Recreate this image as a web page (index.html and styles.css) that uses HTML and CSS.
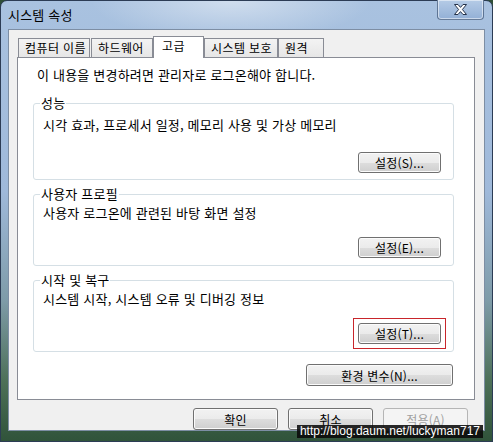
FILE: index.html
```html
<!DOCTYPE html>
<html lang="ko">

<head>
    <meta charset="UTF-8">
    <meta name="viewport" content="width=device-width, initial-scale=1.0">
    <title>시스템 속성</title>
    <link rel="stylesheet" href="styles.css">
</head>

<body>

    <div class="window">
        <div class="titlebar">
            <span class="title">시스템 속성</span>
            <span class="close-btn">
                <svg width="13" height="11" viewBox="0 0 13 11">
                    <path d="M0.5 0.5 H4 L6.5 3.4 L9 0.5 H12.5 L8.4 5.5 L12.5 10.5 H9 L6.5 7.6 L4 10.5 H0.5 L4.6 5.5 Z"
                        fill="#ffffff" stroke="#25324a" stroke-width="1" stroke-linejoin="round" />
                </svg>
            </span>
        </div>

        <div class="client">
            <!-- 탭 -->
            <div class="tabs">
                <div class="tab">컴퓨터 이름</div>
                <div class="tab">하드웨어</div>
                <div class="tab active">고급</div>
                <div class="tab">시스템 보호</div>
                <div class="tab">원격</div>
            </div>

            <div class="panel">
                <p class="notice">이 내용을 변경하려면 관리자로 로그온해야 합니다.</p>

                <fieldset class="group">
                    <legend>성능</legend>
                    <p class="desc">시각 효과, 프로세서 일정, 메모리 사용 및 가상 메모리</p>
                    <div class="group-actions">
                        <button class="btn">설정(S)...</button>
                    </div>
                </fieldset>

                <fieldset class="group">
                    <legend>사용자 프로필</legend>
                    <p class="desc">사용자 로그온에 관련된 바탕 화면 설정</p>
                    <div class="group-actions">
                        <button class="btn">설정(E)...</button>
                    </div>
                </fieldset>

                <fieldset class="group">
                    <legend>시작 및 복구</legend>
                    <p class="desc">시스템 시작, 시스템 오류 및 디버깅 정보</p>
                    <div class="group-actions">
                        <span class="mark-box">
                            <button class="btn">설정(T)...</button>
                        </span>
                    </div>
                </fieldset>

                <div class="panel-actions">
                    <button class="btn btn-wide">환경 변수(N)...</button>
                </div>
            </div>

            <!-- 확인 / 취소 / 적용 -->
            <div class="dialog-actions">
                <button class="btn btn-dlg">확인</button>
                <button class="btn btn-dlg">취소</button>
                <button class="btn btn-dlg" disabled>적용(A)</button>
            </div>
        </div>

        <div class="watermark">http://blog.daum.net/luckyman717</div>
    </div>

</body>

</html>
```

FILE: styles.css
```css
body {
    margin: 0;
    font-family: "Noto Sans CJK KR", "Liberation Sans", sans-serif;
    font-size: 13px;
    letter-spacing: 0.2px;
    color: #000;
    background: #2f4f37;
}

.window {
    position: relative;
    box-sizing: border-box;
    width: 493px;
    height: 442px;
    display: flex;
    flex-direction: column;
    padding: 0 7px 10px 7px;
    border: 1px solid #2c3c55;
    border-radius: 7px 7px 0 0;
    background:
        radial-gradient(ellipse 140px 40px at 230px 0, rgba(255, 255, 255, 0.45), rgba(255, 255, 255, 0) 100%),
        linear-gradient(to bottom, #a9c2e0 0, #9fb9da 190px, #7e9ba8 300px, #4d7058 380px, #2f5239 442px);
}

/* 제목 표시줄 */
.titlebar {
    height: 28px;
    display: flex;
    align-items: flex-start;
    justify-content: space-between;
}

.title {
    margin-top: 7px;
    line-height: 14px;
}

.close-btn {
    box-sizing: border-box;
    width: 47px;
    height: 20px;
    margin-top: -1px;
    margin-right: 1px;
    display: flex;
    align-items: center;
    justify-content: center;
    border: 1px solid rgba(40, 60, 90, 0.55);
    border-top: none;
    border-radius: 0 0 4px 4px;
    background: linear-gradient(to bottom, #b5cbe6, #93b0d6);
    box-shadow: inset 0 0 0 1px rgba(255, 255, 255, 0.5);
}

/* 대화 상자 본문 */
.client {
    flex: 1;
    box-sizing: border-box;
    padding: 6px 9px 0 8px;
    border: 1px solid #7d8ea4;
    background: #f0f0f0;
}

.tabs {
    height: 21px;
    display: flex;
    align-items: flex-end;
    padding-left: 1px;
}

.tab {
    box-sizing: border-box;
    height: 19px;
    padding-left: 6px;
    font-size: 12px;
    letter-spacing: 0.4px;
    line-height: 17px;
    white-space: nowrap;
    border: 1px solid #898c95;
    border-bottom: none;
    background: linear-gradient(to bottom, #f3f3f3, #e6e6e6);
}

.tab:nth-child(1) { width: 72px; margin-right: 1px; }
.tab:nth-child(2) { width: 62px; }
.tab:nth-child(3) { width: 51px; }
.tab:nth-child(4) { width: 74px; }
.tab:nth-child(5) { width: 46px; }

.tab.active {
    position: relative;
    z-index: 1;
    height: 22px;
    margin-bottom: -1px;
    padding-left: 8px;
    line-height: 18px;
    background: #fff;
}

.panel {
    box-sizing: border-box;
    height: 343px;
    display: flex;
    flex-direction: column;
    border: 1px solid #898c95;
    background: #fff;
}

.notice {
    margin: 10px 0 0 19px;
    line-height: 14px;
}

.group {
    margin: 8px 20px 0 15px;
    padding: 0 12px 7px 6px;
    border: 1px solid #d5dfe5;
    border-radius: 3px;
}

.group legend {
    padding: 0 1px;
    line-height: 12px;
}

.group:first-of-type {
    margin-top: 15px;
    padding-bottom: 6px;
}

.desc {
    margin: 6px 0 0 3px;
    line-height: 14px;
}

.group:first-of-type .desc {
    margin-top: 9px;
}

.group-actions {
    display: flex;
    justify-content: flex-end;
    margin-top: 17px;
}

.group:first-of-type .group-actions {
    margin-top: 20px;
}

.panel-actions {
    display: flex;
    justify-content: flex-end;
    margin: 12px 21px 0 0;
}

.dialog-actions {
    display: flex;
    justify-content: flex-end;
    gap: 10px;
    margin-top: 8px;
    padding-right: 7px;
}

/* 버튼 */
.btn {
    box-sizing: border-box;
    width: 83px;
    height: 21px;
    padding: 0;
    font-family: inherit;
    font-size: 12px;
    letter-spacing: inherit;
    color: #000;
    border: 1px solid #707070;
    border-radius: 3px;
    background: linear-gradient(to bottom, #f2f2f2 0%, #ebebeb 50%, #dddddd 51%, #cfcfcf 100%);
    box-shadow: inset 0 0 0 1px #fbfbfb;
}

.btn-wide {
    width: 147px;
    height: 22px;
}

.btn-dlg {
    width: 85px;
    height: 22px;
}

.btn:disabled {
    color: #a0a0a0;
    border-color: #b5b5b5;
    background: #f4f4f4;
    box-shadow: none;
}

/* 빨간 표시 상자 */
.mark-box {
    display: flex;
    outline: 1px solid #c8252b;
    outline-offset: 4px;
}

.watermark {
    position: absolute;
    right: 9px;
    bottom: 3px;
    padding: 0 3px;
    line-height: 13px;
    font-family: "Liberation Sans", sans-serif;
    font-size: 12px;
    letter-spacing: 0;
    color: #fff;
    background: rgba(10, 10, 10, 0.88);
}
```
